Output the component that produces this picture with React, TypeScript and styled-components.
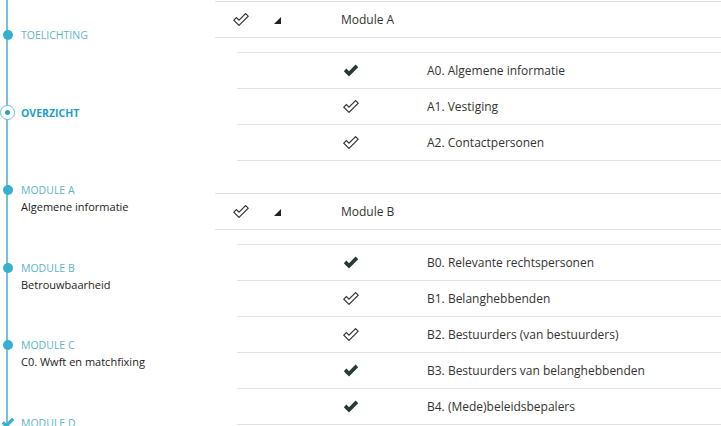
import React from "react";
import styled, { createGlobalStyle } from "styled-components";

const GlobalStyle = createGlobalStyle`
  html, body { margin: 0; padding: 0; background: #ffffff; }
  body { font-family: "Open Sans", "Liberation Sans", sans-serif; overflow: hidden; }
  * { box-sizing: border-box; }
`;

const Page = styled.div`
  display: flex;
  width: 721px;
  height: 426px;
  overflow: hidden;
  background: #fff;
`;

/* ---------- Sidebar ---------- */
const Sidebar = styled.nav`
  position: relative;
  width: 215px;
  flex: none;
  padding-top: 28px;
  &::before {
    content: "";
    position: absolute;
    left: 6px;
    top: 0;
    bottom: 0;
    width: 2px;
    background: #74c3d7;
  }
`;

const Step = styled.div`
  display: flex;
  align-items: flex-start;
  height: 77.5px;
`;

const MarkerBox = styled.div`
  position: relative;
  z-index: 1;
  width: 15px;
  height: 14px;
  flex: none;
  display: flex;
  align-items: center;
  justify-content: center;
`;

const Dot = styled.span`
  width: 10px;
  height: 10px;
  border-radius: 50%;
  background: #36afd0;
`;

const Ring = styled.span`
  width: 15px;
  height: 15px;
  border-radius: 50%;
  border: 1px solid #6cc0d6;
  background: #fff;
  display: flex;
  align-items: center;
  justify-content: center;
  &::after {
    content: "";
    width: 5px;
    height: 5px;
    border-radius: 50%;
    background: #2aa3b3;
  }
`;

const Labels = styled.div`
  margin-left: 6px;
  display: flex;
  flex-direction: column;
`;

const StepTitle = styled.span<{ $active?: boolean }>`
  font-size: 10.5px;
  line-height: 14px;
  text-transform: uppercase;
  color: ${(p) => (p.$active ? "#1e9fc0" : "#5db5c9")};
  font-weight: ${(p) => (p.$active ? 700 : 400)};
  letter-spacing: 0;
`;

const StepSub = styled.span`
  margin-top: 3px;
  font-size: 11px;
  line-height: 14px;
  color: #222;
`;

/* ---------- Main ---------- */
const Main = styled.main`
  flex: 1;
  padding-top: 1px;
  min-width: 0;
`;

const ModuleBlock = styled.section`
  margin-bottom: 32px;
`;

const HeaderRow = styled.div`
  display: grid;
  grid-template-columns: 51px 75px 1fr;
  align-items: center;
  height: 37px;
  border-top: 1px solid #e2e2e2;
  border-bottom: 1px solid #e2e2e2;
`;

const IconCell = styled.div`
  display: flex;
  justify-content: center;
  align-items: center;
  padding-left: 1px;
`;

const CaretCell = styled.div`
  display: flex;
  align-items: center;
  padding-left: 8px;
  padding-top: 2px;
`;

const ModuleTitle = styled.span`
  font-size: 12px;
  color: #333;
`;

const SubTable = styled.div`
  margin-top: 14px;
  margin-left: 22px;
  border-bottom: 1px solid #e2e2e2;
`;

const SubRow = styled.div`
  display: flex;
  align-items: center;
  height: 36px;
  padding-left: 106px;
  border-top: 1px solid #e2e2e2;
`;

const CheckCell = styled.div`
  width: 84px;
  flex: none;
  display: flex;
  align-items: center;
`;

const SubText = styled.span`
  font-size: 12px;
  color: #333;
  white-space: nowrap;
`;

/* ---------- Icons ---------- */
const CHECK = "M0.8 7.2 L3.4 4.6 L6 7.2 L12.6 0.6 L15.2 3.2 L6 12.4 Z";

const FilledCheck = () => (
  <svg width="16" height="13" viewBox="0 0 16 13">
    <path d={CHECK} fill="#2b3838" />
  </svg>
);

const OutlineCheck = () => (
  <svg width="16" height="13" viewBox="0 0 16 13">
    <path d={CHECK} fill="none" stroke="#333" strokeWidth="1.15" strokeLinejoin="miter" />
  </svg>
);

const Caret = () => (
  <svg width="7" height="7" viewBox="0 0 7 7">
    <polygon points="7,0 7,7 0,7" fill="#222" />
  </svg>
);

const TealCheck = () => (
  <svg width="14" height="12" viewBox="0 0 16 13">
    <path d={CHECK} fill="#36afd0" />
  </svg>
);

type Item = { done: boolean; label: string };
type Mod = { title: string; items: Item[] };

const modules: Mod[] = [
  {
    title: "Module A",
    items: [
      { done: true, label: "A0. Algemene informatie" },
      { done: false, label: "A1. Vestiging" },
      { done: false, label: "A2. Contactpersonen" },
    ],
  },
  {
    title: "Module B",
    items: [
      { done: true, label: "B0. Relevante rechtspersonen" },
      { done: false, label: "B1. Belanghebbenden" },
      { done: false, label: "B2. Bestuurders (van bestuurders)" },
      { done: true, label: "B3. Bestuurders van belanghebbenden" },
      { done: true, label: "B4. (Mede)beleidsbepalers" },
    ],
  },
];

type StepDef = { title: string; sub?: string; kind: "dot" | "ring" | "check"; active?: boolean };

const steps: StepDef[] = [
  { title: "Toelichting", kind: "dot" },
  { title: "Overzicht", kind: "ring", active: true },
  { title: "Module A", sub: "Algemene informatie", kind: "dot" },
  { title: "Module B", sub: "Betrouwbaarheid", kind: "dot" },
  { title: "Module C", sub: "C0. Wwft en matchfixing", kind: "dot" },
  { title: "Module D", kind: "check" },
];

export default function App() {
  return (
    <Page>
      <GlobalStyle />
      <Sidebar>
        {steps.map((s) => (
          <Step key={s.title}>
            <MarkerBox>
              {s.kind === "dot" && <Dot />}
              {s.kind === "ring" && <Ring />}
              {s.kind === "check" && <TealCheck />}
            </MarkerBox>
            <Labels>
              <StepTitle $active={s.active}>{s.title}</StepTitle>
              {s.sub && <StepSub>{s.sub}</StepSub>}
            </Labels>
          </Step>
        ))}
      </Sidebar>
      <Main>
        {modules.map((m) => (
          <ModuleBlock key={m.title}>
            <HeaderRow>
              <IconCell>
                <OutlineCheck />
              </IconCell>
              <CaretCell>
                <Caret />
              </CaretCell>
              <ModuleTitle>{m.title}</ModuleTitle>
            </HeaderRow>
            <SubTable>
              {m.items.map((it) => (
                <SubRow key={it.label}>
                  <CheckCell>{it.done ? <FilledCheck /> : <OutlineCheck />}</CheckCell>
                  <SubText>{it.label}</SubText>
                </SubRow>
              ))}
            </SubTable>
          </ModuleBlock>
        ))}
      </Main>
    </Page>
  );
}
